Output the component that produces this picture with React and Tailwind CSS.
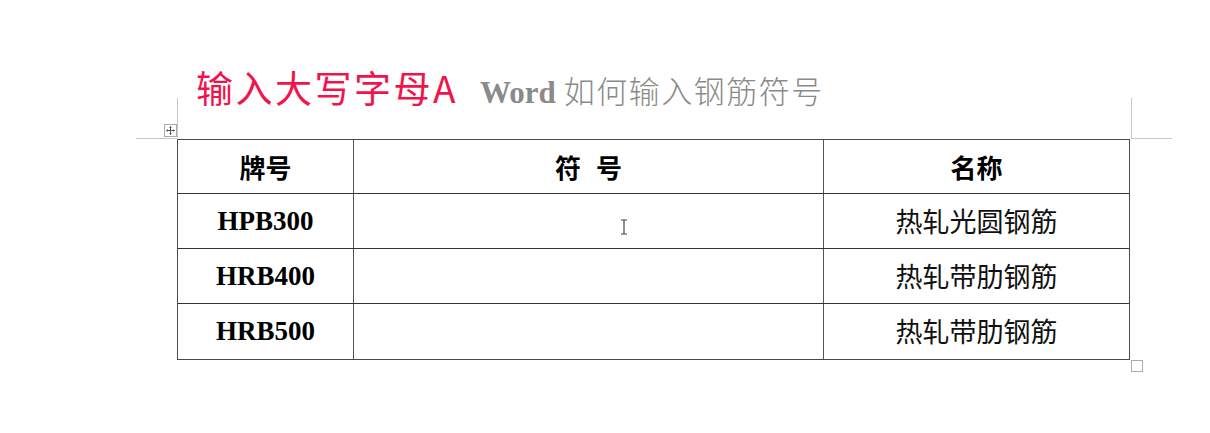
import React from "react";

const rows = [
  ["HPB300", "热轧光圆钢筋"],
  ["HRB400", "热轧带肋钢筋"],
  ["HRB500", "热轧带肋钢筋"],
];

const cjk = { fontFamily: '"Noto Sans CJK SC", sans-serif' };
const serif = { fontFamily: '"Liberation Serif", "Noto Sans CJK SC", serif' };

export default function App() {
  return (
    <div className="relative w-[1210px] h-[433px] bg-white overflow-hidden">
      {/* Title */}
      <div className="pt-[64px] pl-[196px] flex items-baseline h-[139px] box-border">
        <span className="text-[37px] leading-[46px] text-[#f2134b] tracking-[2.5px]" style={cjk}>
          输入大写字母A
        </span>
        <span className="ml-[22px] text-[31px] leading-[46px] text-[#8a8a8a]" style={serif}>
          <b>Word</b>
          <span className="ml-[8px] font-light tracking-[1.5px]" style={cjk}>如何输入钢筋符号</span>
        </span>
      </div>

      {/* Table */}
      <div className="ml-[177px] w-[953px] border border-[#4a4a4a]">
        <div className="grid grid-cols-[176px_470px_1fr] h-[54px] border-b border-[#333]">
          <div className="flex items-center justify-center border-r border-[#555] text-[26px] font-bold text-black" style={cjk}>牌号</div>
          <div className="flex items-center justify-center gap-[15px] border-r border-[#555] text-[26px] font-bold text-black" style={cjk}>
            <span>符</span>
            <span>号</span>
          </div>
          <div className="flex items-center justify-center text-[26px] font-bold text-black" style={cjk}>名称</div>
        </div>
        {rows.map(([a, b], i) => (
          <div
            key={i}
            className={`grid grid-cols-[176px_470px_1fr] h-[55px] ${i < rows.length - 1 ? "border-b border-[#333]" : ""}`}
          >
            <div className="flex items-center justify-center border-r border-[#555] text-[27px] font-bold text-black" style={serif}>{a}</div>
            <div className="relative border-r border-[#555]">
              {i === 0 && (
                <svg className="absolute left-[266px] top-[25px]" width="8" height="16" viewBox="0 0 8 16">
                  <path d="M1 1h6M4 1v14M1 15h6" stroke="#444" strokeWidth="1.2" fill="none" />
                </svg>
              )}
            </div>
            <div className="flex items-center justify-center text-[27px] text-[#111]" style={cjk}>{b}</div>
          </div>
        ))}
      </div>

      {/* Margin guides */}
      <div className="absolute left-[177px] top-[98px] w-px h-[40px] bg-[#c8c8c8]" />
      <div className="absolute left-[136px] top-[138px] w-[41px] h-px bg-[#c8c8c8]" />
      <div className="absolute left-[1131px] top-[98px] w-px h-[40px] bg-[#c8c8c8]" />
      <div className="absolute left-[1131px] top-[138px] w-[41px] h-px bg-[#c8c8c8]" />

      {/* Move handle */}
      <div className="absolute left-[164px] top-[124px] w-[13px] h-[13px] border border-[#aaa] bg-white flex items-center justify-center">
        <svg width="9" height="9" viewBox="0 0 9 9">
          <path d="M4.5 0.5v8M0.5 4.5h8M3.5 1.5l1-1 1 1M3.5 7.5l1 1 1-1M1.5 3.5l-1 1 1 1M7.5 3.5l1 1-1 1" stroke="#555" strokeWidth="1" fill="none" />
        </svg>
      </div>

      {/* Resize handle */}
      <div className="absolute left-[1131px] top-[360px] w-[12px] h-[12px] border border-[#aaa] bg-white" />
    </div>
  );
}
